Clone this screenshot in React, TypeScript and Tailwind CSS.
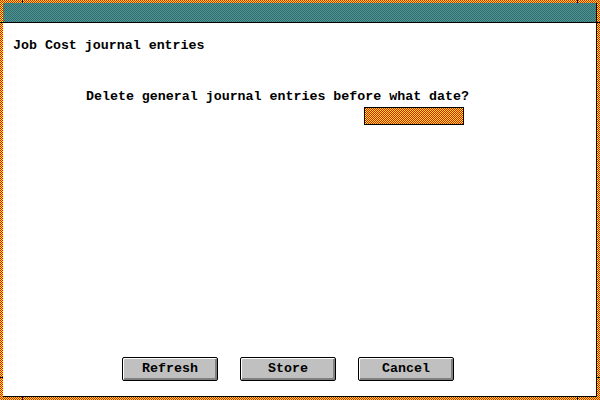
import React from 'react';

const Button: React.FC<{ label: string }> = ({ label }) => (
  <button className="w-[96px] h-[24px] rounded-[2px] border border-black bg-[#c0c0c0] shadow-[inset_1px_1px_0_#ffffff,inset_-2px_-2px_0_#808080] text-black font-bold text-[13.3px] leading-none">
    {label}
  </button>
);

export default function App() {
  return (
    <div className="relative w-[600px] h-[400px] p-[3px] bg-[linear-gradient(to_bottom_right,#ff0000_37.5%,#ffff00_37.5%,#ffff00_62.5%,#ff0000_62.5%)] bg-[length:2px_2px] font-['Liberation_Mono',monospace]">
      {/* resize ticks in frame */}
      <div className="absolute left-[22px] top-0 w-px h-[3px] bg-black" />
      <div className="absolute left-[577px] top-0 w-px h-[3px] bg-black" />
      <div className="absolute left-[22px] bottom-0 w-px h-[3px] bg-black" />
      <div className="absolute left-[577px] bottom-0 w-px h-[3px] bg-black" />
      <div className="absolute top-[22px] left-0 h-px w-[3px] bg-black" />
      <div className="absolute top-[377px] left-0 h-px w-[3px] bg-black" />
      <div className="absolute top-[22px] right-0 h-px w-[3px] bg-black" />
      <div className="absolute top-[377px] right-0 h-px w-[3px] bg-black" />

      <div className="h-full flex flex-col bg-white border-r border-b border-black">
        {/* title bar */}
        <div className="h-[20px] shrink-0 border-b border-black bg-[linear-gradient(to_bottom_right,#008080_37.5%,#808080_37.5%,#808080_62.5%,#008080_62.5%)] bg-[length:2px_2px]" />

        <div className="flex-1 flex flex-col text-black font-bold text-[13.3px] leading-[16px]">
          <div className="pl-[10px] pt-[15px]">Job Cost journal entries</div>
          <div className="pl-[83px] mt-[35px]">Delete general journal entries before what date?</div>
          <div className="ml-[361px] mt-[2px] w-[100px] h-[18px] border border-black bg-[linear-gradient(to_bottom_right,#ff0000_37.5%,#ffff00_37.5%,#ffff00_62.5%,#ff0000_62.5%)] bg-[length:2px_2px]" />

          <div className="mt-auto mb-[15px] pl-[119px] flex gap-[22px]">
            <Button label="Refresh" />
            <Button label="Store" />
            <Button label="Cancel" />
          </div>
        </div>
      </div>
    </div>
  );
}
